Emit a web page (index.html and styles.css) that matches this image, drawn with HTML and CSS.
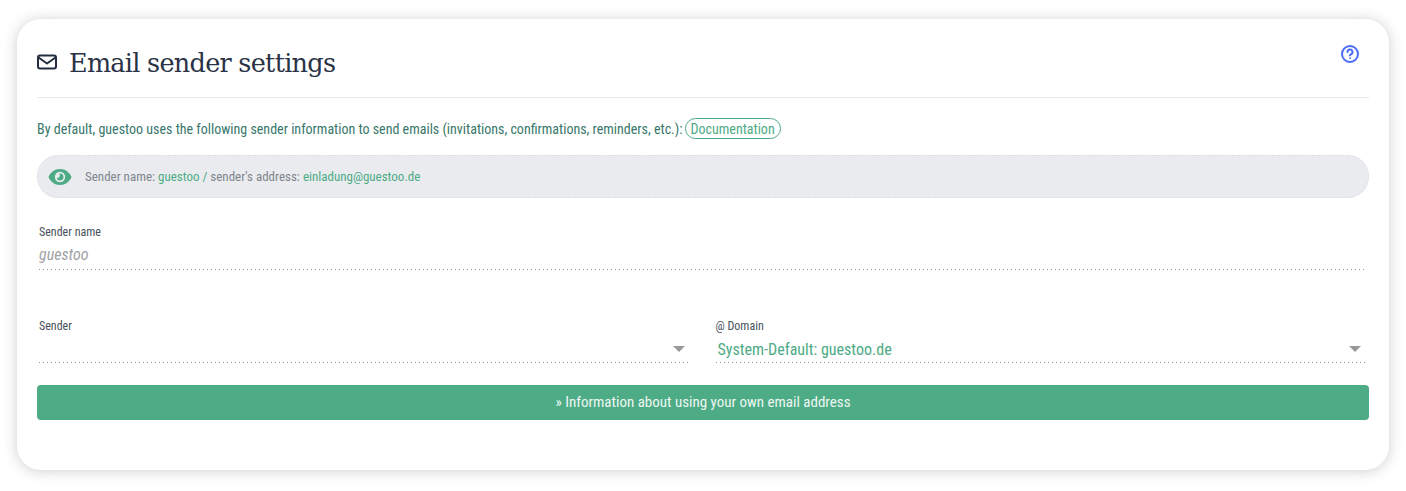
FILE: index.html
```html
<!DOCTYPE html>
<html lang="en">
<head>
<meta charset="utf-8">
<title>Email sender settings</title>
<link rel="stylesheet" href="styles.css">
</head>
<body>
<main class="card">
  <header class="head">
    <svg class="mail" width="20" height="16" viewBox="0 0 20 16" fill="none" stroke="#232c40" stroke-width="2" stroke-linejoin="round"><rect x="1" y="1.500" width="18" height="13" rx="2"/><path d="M1.500 3.500 10 9.500l8.500-6"/></svg>
    <h1 class="title">Email sender settings</h1>
    <svg class="help" width="20" height="20" viewBox="0 0 20 20" fill="none" stroke="#4a6cf7" stroke-width="2"><circle cx="10" cy="10" r="8"/><path d="M7.500 8a2.500 2.500 0 1 1 3.700 2.100c-.8.500-1.200.9-1.200 1.500" stroke-linecap="round"/><circle cx="10" cy="14.200" r=".5" fill="#4a6cf7" stroke-width="1"/></svg>
  </header>
  <p class="intro"><span class="c">By default, guestoo uses the following sender information to send emails (invitations, confirmations, reminders, etc.):</span><a class="pill c" href="#">Documentation</a></p>
  <div class="preview">
    <svg class="eye" width="24" height="16" viewBox="0 0 24 16"><path fill="#4dab85" fill-rule="evenodd" d="M12 0C6.500 0 2.500 3.500.5 8c2 4.500 6 8 11.500 8s9.500-3.500 11.500-8C21.500 3.500 17.500 0 12 0Zm0 2.800a5.200 5.200 0 1 1 0 10.400 5.200 5.200 0 0 1 0-10.400Z"/><path fill="#4dab85" d="M12 4.500a3.500 3.500 0 1 1-3.400 4.300 2.500 2.500 0 0 0 3.100-1.500c.3-1 .2-2-.7-2.700.3-.1.700-.1 1-.1Z"/></svg>
    <span class="c pv">Sender name: <b>guestoo /</b> sender's address: <b>einladung@guestoo.de</b></span>
  </div>
  <section class="f1">
    <label class="lbl c">Sender name</label>
    <div class="val ph c">guestoo</div>
  </section>
  <section class="row">
    <div>
      <label class="lbl c">Sender</label>
      <div class="val sel"><i class="caret"></i></div>
    </div>
    <div>
      <label class="lbl c">@ Domain</label>
      <div class="val sel green"><span class="c">System-Default: guestoo.de</span><i class="caret"></i></div>
    </div>
  </section>
  <a class="btn" href="#"><span class="c">» Information about using your own email address</span></a>
</main>
</body>
</html>
```
FILE: styles.css
```css
* { box-sizing: border-box; }
html, body { margin: 0; height: 100%; background: #fff; }
body { padding: 19px 17px 21px; font-family: Roboto, "Liberation Sans", sans-serif; }
.c { font-stretch: 75%; }
.card {
  height: 451px; padding: 0 20px; background: #fff; border-radius: 24px;
  box-shadow: 0 1px 14px rgba(40, 50, 60, .24);
}
.head { display: flex; align-items: center; height: 79px; padding-top: 9px; border-bottom: 1px solid #e6e8ea; position: relative; }
.mail { margin-right: 12px; margin-top: -2px; }
.title { margin: 0; font: 400 25.500px "DejaVu Serif", serif; letter-spacing: -.72px; color: #2a3346; }
.help { position: absolute; right: 9px; top: 25px; }
.intro { margin: 19px 0 0; height: 23px; display: flex; align-items: center; gap: 2px; font-size: 14px; color: #38776b; white-space: pre; }
.pill { height: 21px; padding: 0 5px; display: flex; align-items: center; border: 1px solid #4dab85; border-radius: 11px; color: #4dab85; text-decoration: none; }
.preview { margin-top: 15px; height: 43px; display: flex; align-items: center; padding-left: 10px; gap: 13px; background: #e9ebef; border: 1px dashed #dcdfe3; border-radius: 21px; }
.pv { font-size: 13px; color: #80858c; }
.pv b { font-weight: 400; color: #4dab85; }
.f1 { margin: 27px 4px 0 2px; }
.lbl { display: block; font-size: 12px; line-height: 14px; color: #4a525c; }
.val {
  height: 31px; position: relative; font-size: 16px; line-height: 31px;
  background: linear-gradient(to right, #999 1px, transparent 1px) left bottom / 4px 1px repeat-x;
}
.ph { font-style: italic; color: #a0a3a6; }
.row { display: grid; grid-template-columns: 1fr 1fr; column-gap: 27px; margin: 49px 4px 0 2px; }
.row .val { height: 30px; line-height: 33px; padding-left: 2px; }
.green { color: #4dab85; }
.caret { position: absolute; right: 4px; top: 13px; width: 0; height: 0; border: 6px solid transparent; border-top: 6px solid #999; border-bottom: 0; }
.btn { display: flex; justify-content: center; align-items: center; height: 35px; margin-top: 22px; padding-bottom: 1px; background: #4dab85; border-radius: 4px; color: #eef7f3; font-size: 15px; text-decoration: none; }
```
